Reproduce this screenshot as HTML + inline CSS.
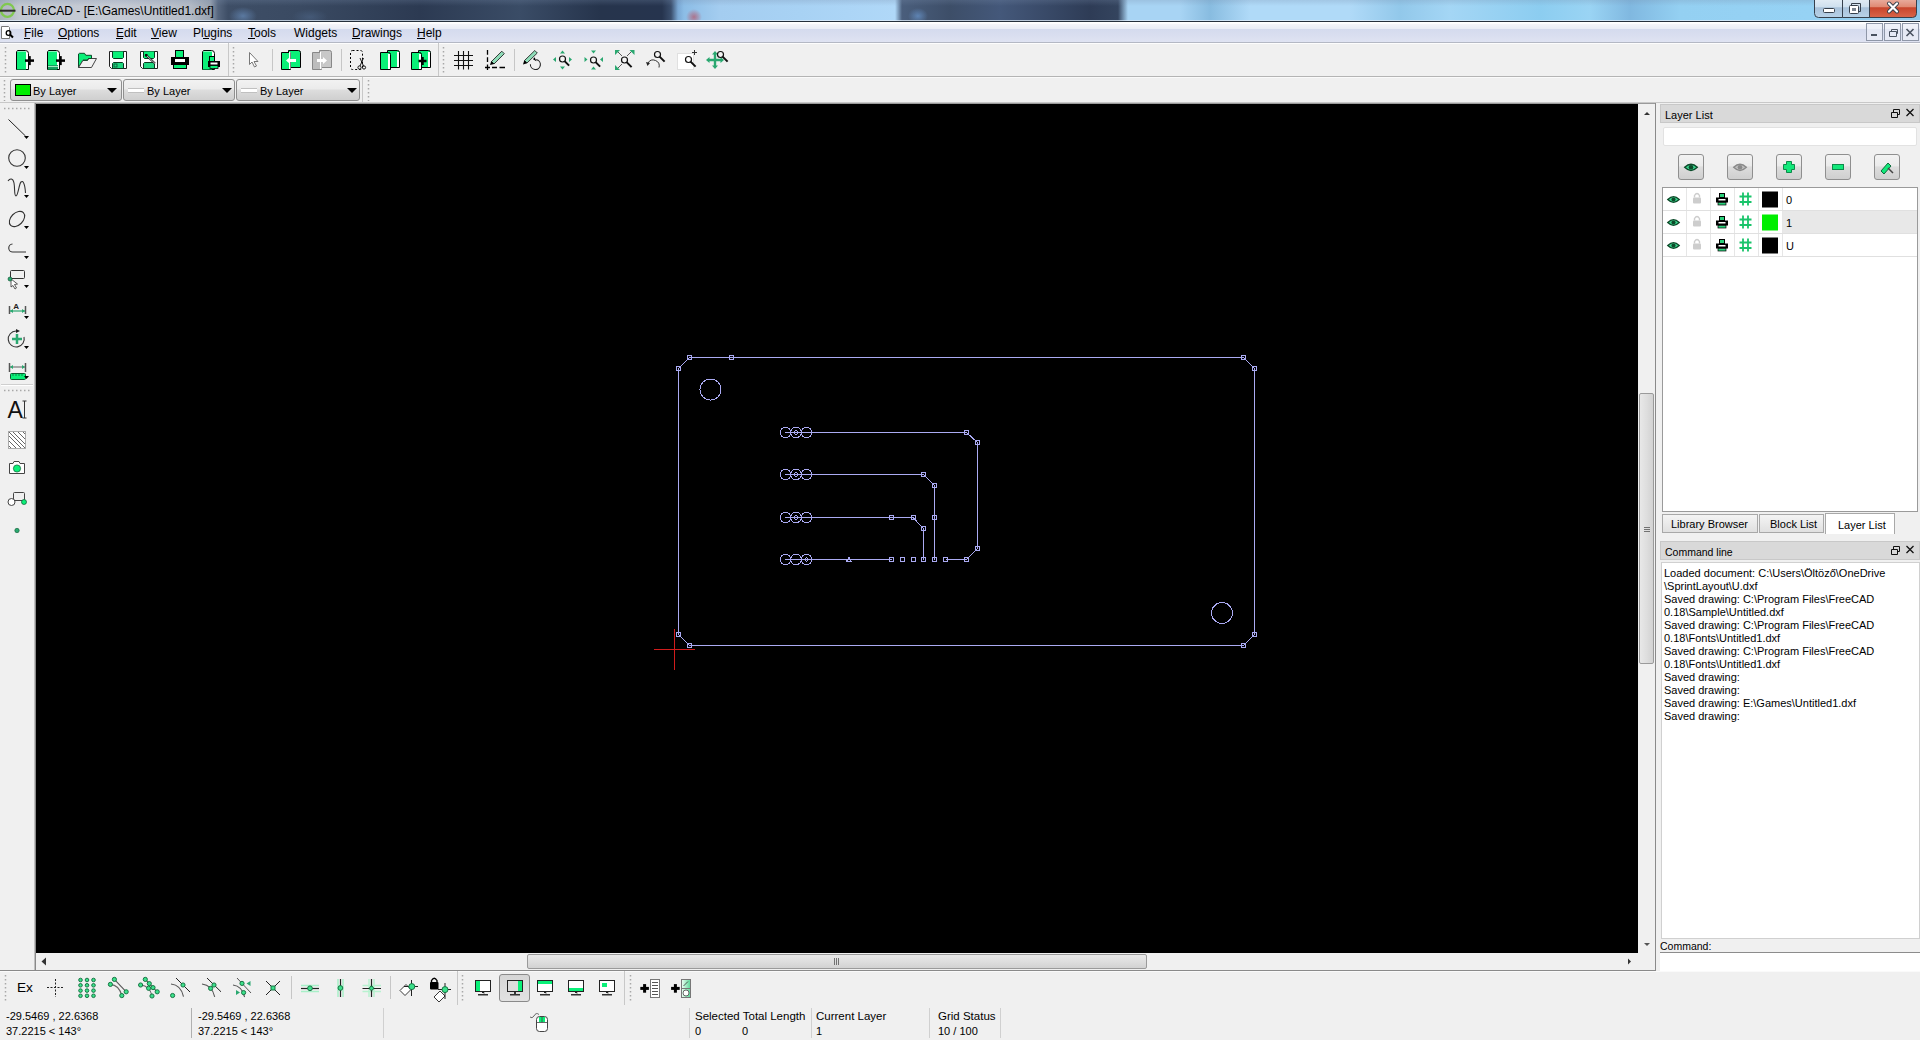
<!DOCTYPE html>
<html><head><meta charset="utf-8">
<style>
*{margin:0;padding:0;box-sizing:border-box}
html,body{width:1920px;height:1040px;overflow:hidden;background:#f0f0f0;font-family:"Liberation Sans",sans-serif;font-size:12px;color:#000;position:relative}
.a{position:absolute}
.t{position:absolute;white-space:nowrap;line-height:1}
#title{left:0;top:0;width:1920px;height:21px;background:radial-gradient(circle at 694px 17px,rgba(180,90,110,.75) 0,rgba(180,90,110,.4) 4px,rgba(180,90,110,0) 8px),radial-gradient(ellipse 14px 9px at 243px 16px,rgba(110,150,200,.6),rgba(110,150,200,0)),radial-gradient(ellipse 18px 8px at 310px 17px,rgba(90,120,160,.35),rgba(90,120,160,0)),radial-gradient(ellipse 10px 8px at 918px 16px,rgba(110,160,220,.6),rgba(110,160,220,0)),linear-gradient(rgba(120,140,170,.25),rgba(120,140,170,0) 6px),linear-gradient(90deg,#a8b4bc 0px,#c4c9d2 20px,#c6cbd4 120px,#b4bbc6 190px,#98a2b0 210px,#56667e 218px,#3e4e66 228px,#3a4a62 300px,#2c3a52 420px,#3a4c66 520px,#26344c 600px,#26344e 662px,#3a4e6c 671px,#7aa8d4 678px,#8cbde6 684px,#a4cdf0 720px,#a8d2f4 800px,#b0d8f8 895px,#4a5e7c 902px,#3d4e68 950px,#44587a 1000px,#2e3c56 1090px,#34445e 1118px,#a8d4f4 1128px,#a8d4f4 1180px,#88bce0 1210px,#b0daf8 1250px,#b0daf8 1350px,#92c8ea 1400px,#a4d6f5 1450px,#8ccdf0 1540px,#9ad4f4 1590px,#80b8e0 1630px,#94d0f2 1680px,#96d2f4 1810px,#90c8ea 1920px)}
#titlehl{left:0;top:20px;width:1920px;height:1px;background:rgba(225,238,250,.75)}
#titleline{left:0;top:21px;width:1920px;height:1px;background:#26303c}
#menubar{left:0;top:22px;width:1920px;height:21px;background:linear-gradient(#fff 0,#fff 1.3px,#f3f4f9 2.5px,#eaedf6 6.5px,#d5dbee 7.5px,#d8ddef 12px,#dfe3f2 20px);border-bottom:1px solid #b4b8c4}
.menu{position:absolute;top:5px;font-size:12px;line-height:1;color:#000}
.ul{position:absolute;height:1px;background:#000;top:16px}
.hl{position:absolute;height:1px;background:#a0a0a0}
.vl{position:absolute;width:1px;background:#a0a0a0}
.sep{position:absolute;width:1px;background:#b8b8b8}
.combo{position:absolute;top:79px;height:22px;border:1px solid #8f8f8f;border-radius:3px;background:linear-gradient(#f2f2f2 0,#ebebeb 45%,#dddddd 50%,#cfcfcf 100%)}
.combo .txt{position:absolute;top:6px;font-size:11px;line-height:1}
.arr{position:absolute;width:0;height:0;border-left:5px solid transparent;border-right:5px solid transparent;border-top:5px solid #000;top:8px}
#canvas{left:36px;top:104px;width:1602px;height:849px;background:#000}
.st{position:absolute;font-size:11px;line-height:1;white-space:nowrap}
.dock-title{position:absolute;left:1660px;width:260px;height:19px;background:#d9d9d9;border:1px solid #c8c8c8}
.dock-title .t{left:4px;top:5px;font-size:11px}
.cmd{position:absolute;left:1664px;font-size:11px;line-height:1;white-space:nowrap}
.cell{position:absolute;border-right:1px solid #e8e8e8;border-bottom:1px solid #e0e0e0}
.lbtn{position:absolute;top:154px;width:26px;height:26px;border:1px solid #8f8f8f;border-radius:3px;background:linear-gradient(#f2f2f2 0,#ebebeb 45%,#dddddd 50%,#cfcfcf 100%)}
.tab{position:absolute;top:514px;height:19px;border:1px solid #a8a8a8;background:linear-gradient(#f4f4f4,#e0e0e0);font-size:11px}
.tab .t{top:4px}
</style></head><body>
<div id="title" class="a"></div>
<div class="t" style="left:21px;top:5px;font-size:12px;color:#000">LibreCAD - [E:\Games\Untitled1.dxf]</div>
<div id="titlehl" class="a"></div><div id="titleline" class="a"></div>
<div id="menubar" class="a">
 <span class="menu" style="left:24px">File</span><i class="ul" style="left:24px;width:6px"></i>
 <span class="menu" style="left:58px">Options</span><i class="ul" style="left:58px;width:9px"></i>
 <span class="menu" style="left:116px">Edit</span><i class="ul" style="left:116px;width:7px"></i>
 <span class="menu" style="left:151px">View</span><i class="ul" style="left:151px;width:8px"></i>
 <span class="menu" style="left:193px">Plugins</span><i class="ul" style="left:203px;width:6px"></i>
 <span class="menu" style="left:248px">Tools</span><i class="ul" style="left:248px;width:7px"></i>
 <span class="menu" style="left:294px">Widgets</span>
 <span class="menu" style="left:352px">Drawings</span><i class="ul" style="left:352px;width:8px"></i>
 <span class="menu" style="left:417px">Help</span><i class="ul" style="left:417px;width:8px"></i>
</div>

<!-- toolbar lines -->
<div class="hl" style="left:0;top:43px;width:1920px;background:#fdfdfd"></div>
<div class="hl" style="left:0;top:76px;width:1920px;background:#b4b4b4"></div>
<div class="hl" style="left:0;top:77px;width:1920px;background:#fafafa"></div>
<div class="hl" style="left:0;top:102px;width:1920px;background:#c8c8c8"></div>
<div class="hl" style="left:35px;top:103px;width:1621px;background:#9a9a9a"></div>
<div class="vl" style="left:228px;top:43px;height:33px;background:#c8c8c8"></div>
<div class="vl" style="left:438px;top:43px;height:33px;background:#c8c8c8"></div>
<div class="vl" style="left:362px;top:77px;height:25px;background:#c8c8c8"></div>
<div class="sep" style="left:272px;top:49px;height:22px;background:#c6c6c6"></div>
<div class="sep" style="left:341px;top:49px;height:22px;background:#c6c6c6"></div>
<div class="sep" style="left:514px;top:49px;height:22px;background:#c6c6c6"></div>

<!-- combos -->
<div class="combo" style="left:10px;width:112px"><div class="txt" style="left:22px">By Layer</div><i class="arr" style="left:96px"></i></div>
<div class="combo" style="left:123px;width:112px"><div class="txt" style="left:23px">By Layer</div><i class="arr" style="left:98px"></i></div>
<div class="combo" style="left:236px;width:124px"><div class="txt" style="left:23px">By Layer</div><i class="arr" style="left:110px"></i></div>
<div class="a" style="left:15px;top:84px;width:16px;height:12px;background:#00ee00;border:1px solid #000"></div>
<div class="a" style="left:128px;top:88px;width:16px;height:5px;background:#fff;border-top:1px solid #c0c0c0;border-bottom:1px solid #c0c0c0"></div>
<div class="a" style="left:241px;top:88px;width:16px;height:5px;background:#fff;border-top:1px solid #c0c0c0;border-bottom:1px solid #c0c0c0"></div>

<!-- canvas frame -->
<div class="vl" style="left:34px;top:103px;height:868px;background:#c0c0c0"></div>
<div class="vl" style="left:35px;top:103px;height:868px;background:#8a8a8a"></div>
<div id="canvas" class="a"></div>
<div class="a" style="left:1638px;top:104px;width:17px;height:849px;background:#f0f0f0"></div>
<div class="a" style="left:36px;top:953px;width:1602px;height:17px;background:#f0f0f0"></div>
<div class="vl" style="left:1655px;top:103px;height:868px;background:#8a8a8a"></div>
<div class="hl" style="left:0;top:970px;width:1656px;background:#8a8a8a"></div>
<!-- scroll thumbs -->
<div class="a" style="left:1639px;top:393px;width:15px;height:271px;border:1px solid #9a9a9a;border-radius:2px;background:linear-gradient(90deg,#e8e8e8,#dedede 50%,#d2d2d2)"></div>
<div class="a" style="left:527px;top:954px;width:620px;height:15px;border:1px solid #9a9a9a;border-radius:2px;background:linear-gradient(#e8e8e8,#dedede 50%,#d2d2d2)"></div>

<!-- right dock -->
<div class="dock-title" style="top:104px"><span class="t">Layer List</span></div>
<div class="a" style="left:1663px;top:127px;width:254px;height:19px;background:#fff;border:1px solid #e2e2e2;border-radius:2px"></div>
<div class="lbtn" style="left:1678px"></div>
<div class="lbtn" style="left:1727px"></div>
<div class="lbtn" style="left:1776px"></div>
<div class="lbtn" style="left:1825px"></div>
<div class="lbtn" style="left:1874px"></div>
<div class="a" style="left:1662px;top:187px;width:256px;height:325px;background:#fff;border:1px solid #9a9a9a"></div>
<div class="a" style="left:1782px;top:211px;width:135px;height:23px;background:#e8e8e8"></div>
<div class="tab" style="left:1662px;width:96px"><span class="t" style="left:8px">Library Browser</span></div>
<div class="tab" style="left:1759px;width:65px"><span class="t" style="left:10px">Block List</span></div>
<div class="a" style="left:1825px;top:513px;width:70px;height:21px;background:#fff;border:1px solid #a8a8a8;border-bottom:none"><span class="t" style="left:12px;top:6px;font-size:11px">Layer List</span></div>

<div class="dock-title" style="top:541px"><span class="t" style="font-size:10.5px">Command line</span></div>
<div class="a" style="left:1661px;top:562px;width:259px;height:377px;background:#fff;border:1px solid #d0d0d0"></div>
<div class="t" style="left:1660px;top:941px;font-size:10.5px">Command:</div>
<div class="hl" style="left:1660px;top:952px;width:260px;background:#8c8c8c"></div>
<div class="a" style="left:1660px;top:953px;width:260px;height:18px;background:#fff"></div>

<!-- bottom toolbar -->
<div class="hl" style="left:0;top:971px;width:1920px;background:#fafafa"></div>
<div class="t" style="left:17px;top:981px;font-size:13.6px">Ex</div>
<div class="vl" style="left:457px;top:971px;height:34px;background:#c8c8c8"></div>
<div class="vl" style="left:624px;top:971px;height:34px;background:#c8c8c8"></div>
<div class="sep" style="left:291px;top:976px;height:23px;background:#c6c6c6"></div>
<div class="sep" style="left:390px;top:976px;height:23px;background:#c6c6c6"></div>
<div class="a" style="left:499px;top:974px;width:31px;height:28px;border:1px solid #8a8a8a;border-radius:3px;background:linear-gradient(#d6d6d6,#e2e2e2)"></div>

<!-- status bar -->
<div class="st" style="left:6px;top:1011px">-29.5469 , 22.6368</div>
<div class="st" style="left:6px;top:1026px">37.2215 &lt; 143°</div>
<div class="st" style="left:198px;top:1011px">-29.5469 , 22.6368</div>
<div class="st" style="left:198px;top:1026px">37.2215 &lt; 143°</div>
<div class="vl" style="left:191px;top:1008px;height:30px;background:#b0b0b0"></div>
<div class="vl" style="left:383px;top:1008px;height:30px;background:#d0d0d0"></div>
<div class="vl" style="left:689px;top:1008px;height:30px;background:#d0d0d0"></div>
<div class="vl" style="left:811px;top:1008px;height:30px;background:#d0d0d0"></div>
<div class="vl" style="left:929px;top:1008px;height:30px;background:#d0d0d0"></div>
<div class="vl" style="left:1000px;top:1008px;height:30px;background:#d0d0d0"></div>
<div class="st" style="left:695px;top:1011px;font-size:11.5px">Selected Total Length</div>
<div class="st" style="left:695px;top:1026px">0</div>
<div class="st" style="left:742px;top:1026px">0</div>
<div class="st" style="left:816px;top:1011px;font-size:11.5px">Current Layer</div>
<div class="st" style="left:816px;top:1026px">1</div>
<div class="st" style="left:938px;top:1011px;font-size:11.5px">Grid Status</div>
<div class="st" style="left:938px;top:1026px">10 / 100</div>

<div class="cmd" style="top:568px">Loaded document: C:\Users\Öltöző\OneDrive</div>
<div class="cmd" style="top:581px">\SprintLayout\U.dxf</div>
<div class="cmd" style="top:594px">Saved drawing: C:\Program Files\FreeCAD</div>
<div class="cmd" style="top:607px">0.18\Sample\Untitled.dxf</div>
<div class="cmd" style="top:620px">Saved drawing: C:\Program Files\FreeCAD</div>
<div class="cmd" style="top:633px">0.18\Fonts\Untitled1.dxf</div>
<div class="cmd" style="top:646px">Saved drawing: C:\Program Files\FreeCAD</div>
<div class="cmd" style="top:659px">0.18\Fonts\Untitled1.dxf</div>
<div class="cmd" style="top:672px">Saved drawing:</div>
<div class="cmd" style="top:685px">Saved drawing:</div>
<div class="cmd" style="top:698px">Saved drawing: E:\Games\Untitled1.dxf</div>
<div class="cmd" style="top:711px">Saved drawing:</div>
<!--CMDTEXT-->
<svg class="a" style="left:0;top:0" width="1920" height="1040" viewBox="0 0 1920 1040">
<g fill="none" stroke="#aaaaf2" stroke-width="1" shape-rendering="crispEdges">
<path d="M689.5 357.5H1243.5L1254.5 368.5V634.5L1243.5 645.5H689.5L678.5 634.5V368.5Z"/>
<circle cx="710.5" cy="389.5" r="10.5"/>
<circle cx="1222" cy="613" r="10.5"/>
<g>
<rect x="687.5" y="355.5" width="4" height="4"/><rect x="729.5" y="355.5" width="4" height="4"/><rect x="1241.5" y="355.5" width="4" height="4"/><rect x="1252.5" y="366.5" width="4" height="4"/>
<rect x="1252.5" y="632.5" width="4" height="4"/><rect x="1241.5" y="643.5" width="4" height="4"/><rect x="687.5" y="643.5" width="4" height="4"/><rect x="676.5" y="632.5" width="4" height="4"/><rect x="676.5" y="366.5" width="4" height="4"/>
</g>
<path d="M785 432.5H966.5L977.5 442.5V548.5L966.5 559.5"/>
<path d="M785 474.5H923.5L934.5 485.5V559.5"/>
<path d="M785 517.5H913L923.5 528.5V559.5"/>
<path d="M785 559.5H891.5M945.5 559.5H966.5"/>
<circle cx="785.5" cy="432.5" r="5.3"/><circle cx="796" cy="432.5" r="5.3"/><circle cx="806.5" cy="432.5" r="5.3"/>
<circle cx="785.5" cy="474.5" r="5.3"/><circle cx="796" cy="474.5" r="5.3"/><circle cx="806.5" cy="474.5" r="5.3"/>
<circle cx="785.5" cy="517.5" r="5.3"/><circle cx="796" cy="517.5" r="5.3"/><circle cx="806.5" cy="517.5" r="5.3"/>
<circle cx="785.5" cy="559.5" r="5.3"/><circle cx="796" cy="559.5" r="5.3"/><circle cx="806.5" cy="559.5" r="5.3"/>
<circle cx="796" cy="432.5" r="1.8"/><circle cx="796" cy="474.5" r="1.8"/><circle cx="796" cy="517.5" r="1.8"/><circle cx="806.5" cy="559.5" r="1.8"/>
<g>
<rect x="964" y="430" width="4" height="4"/><rect x="975.5" y="440.5" width="4" height="4"/><rect x="975.5" y="546.5" width="4" height="4"/><rect x="964" y="557.5" width="4" height="4"/>
<rect x="921.5" y="472.5" width="4" height="4"/><rect x="932" y="483" width="4" height="4"/><rect x="932" y="515" width="4" height="4"/>
<rect x="889.5" y="515" width="4" height="4"/><rect x="911" y="515" width="4" height="4"/><rect x="921.5" y="526" width="4" height="4"/>
<rect x="889.5" y="557.5" width="4" height="4"/><rect x="900" y="557.5" width="4" height="4"/><rect x="911" y="557.5" width="4" height="4"/><rect x="921.5" y="557.5" width="4" height="4"/><rect x="932" y="557.5" width="4" height="4"/><rect x="943.5" y="557.5" width="4" height="4"/>
<path d="M846.5 561.5L849 557L851.5 561.5Z"/>
</g>
</g>
<g stroke="#d01c1c" stroke-width="1" fill="none" shape-rendering="crispEdges"><path d="M654 649.5H695M674.5 629V670"/></g>
</svg>

<!--ICONS-START-->
<svg class="a" style="left:0;top:0" width="1920" height="1040" viewBox="0 0 1920 1040" fill="none">
<path d="M5.5 47V73" stroke="#a8a8a8" stroke-width="1.5" stroke-dasharray="1.5 2.5"/>
<path d="M16.5 52 L17.5 50.5 H25.5 Q28.5 50.5 28.5 53.5 V69.5 H16.5 Z" fill="#fff" stroke="#000"/>
<rect x="17" y="51.5" width="9" height="18" fill="#0af078"/>
<rect x="25.0" y="59.35" width="9" height="2.5" fill="#000"/><rect x="28.25" y="56.1" width="2.5" height="9" fill="#000"/>
<path d="M47.5 52 L48.5 50.5 H56.5 Q59.5 50.5 59.5 53.5 V69.5 H47.5 Z" fill="#fff" stroke="#000"/>
<rect x="48" y="51.5" width="9" height="18" fill="#0af078"/>
<rect x="48" y="65" width="10" height="4" fill="#15a060"/><path d="M48 66.5H58" stroke="#9fe8c0"/>
<rect x="56.0" y="59.35" width="9" height="2.5" fill="#000"/><rect x="59.25" y="56.1" width="2.5" height="9" fill="#000"/>
<path d="M78.5 67.5V54L79.5 53.3H84.5L85.8 55.3H91.5V58.5H88.5L87.5 60.3H83Z" fill="#0af078" stroke="#0a4a28"/>
<path d="M78.5 67.5L83 60.3H87.5L88.5 58.5H96.5L91.5 67.5Z" fill="#f2f2f2" stroke="#444"/>
<path d="M83 60.3H87.5L88.5 58.5H91.5" fill="none" stroke="#0a4a28"/>
<path d="M109.5 51.5H126.5V68.5H111.5L109.5 66.5Z" fill="#fff" stroke="#222"/>
<path d="M112.5 51.5V57.5L113.5 58.5H122.5L123.5 57.5V51.5" fill="#0af078" stroke="#0a3a20"/>
<path d="M112.5 68.5V63.5L113.5 62.5H122.5L123.5 63.5V68.5Z" fill="#1ed880" stroke="#0a3a20"/>
<rect x="114" y="64" width="3" height="3" fill="none" stroke="#0a5030" stroke-width=".8"/>
<path d="M140.5 51.5H157.5V68.5H142.5L140.5 66.5Z" fill="#fff" stroke="#222"/>
<path d="M143.5 51.5V57.5L144.5 58.5H153.5L154.5 57.5V51.5" fill="#0af078" stroke="#0a3a20"/>
<path d="M143.5 68.5V63.5L144.5 62.5H153.5L154.5 63.5V68.5Z" fill="#1ed880" stroke="#0a3a20"/>
<path d="M145.5 54.5L155 63.5" stroke="#222" stroke-width="2"/><path d="M145.5 54.5L156 64.5" stroke="#ddd" stroke-width=".8"/><path d="M145 54L148 54.5L145.5 57Z" fill="#000"/>
<rect x="175.5" y="50.5" width="8" height="7" fill="#0af078" stroke="#000"/>
<rect x="171" y="57" width="18" height="8" fill="#000"/>
<rect x="175" y="59" width="10" height="3" fill="#fff"/>
<rect x="173.5" y="64.5" width="13" height="4" fill="#0af078" stroke="#000"/>
<path d="M202.5 52 L203.5 50.5 H211.5 Q214.5 50.5 214.5 53.5 V69.5 H202.5 Z" fill="#fff" stroke="#000"/>
<rect x="203" y="51.5" width="9" height="18" fill="#0af078"/>
<rect x="209.5" y="56.5" width="5" height="5" fill="#0af078" stroke="#000"/>
<rect x="208" y="61" width="12" height="6" fill="#000"/><rect x="210.5" y="62.5" width="7" height="2" fill="#fff"/><rect x="210" y="65.5" width="8" height="3" fill="#0af078" stroke="#000" stroke-width=".8"/>
<path d="M233.5 47V73" stroke="#a8a8a8" stroke-width="1.5" stroke-dasharray="1.5 2.5"/>
<path d="M249.5 52.5L249.5 64.5L252 62L254.5 67L256.5 66L254 61.5L258 61.5Z" fill="#fff" stroke="#777"/>
<path d="M288.5 50.5H298.5Q300.5 50.5 300.5 52.5V67.5H288.5Z" fill="#0af078" stroke="#000"/>
<path d="M281.5 52.5H290.5V69.5H281.5Z" fill="#0af078" stroke="#000"/>
<rect x="289" y="52" width="1.5" height="17" fill="#fff"/>
<path d="M286 60.5L290 57V59H296V62H290V64Z" fill="#fff"/>
<path d="M319.5 50.5H329.5Q331.5 50.5 331.5 52.5V67.5H319.5Z" fill="#c8c8c8" stroke="#888"/>
<path d="M312.5 52.5H321.5V69.5H312.5Z" fill="#bdbdbd" stroke="#888"/>
<rect x="320" y="52" width="1.5" height="17" fill="#fff"/>
<path d="M327 60.5L323 57V59H317V62H323V64Z" fill="#fff"/>
<rect x="350.5" y="50.5" width="12" height="19" rx="2" fill="none" stroke="#000" stroke-dasharray="2 2"/>
<path d="M360 58L363.5 66M363.5 58L360 66" stroke="#000" stroke-width=".9"/><circle cx="359.5" cy="67.5" r="1.6" fill="none" stroke="#000" stroke-width=".9"/><circle cx="364" cy="67.5" r="1.6" fill="none" stroke="#000" stroke-width=".9"/>
<path d="M387.5 50.5H397.5Q399.5 50.5 399.5 52.5V67.5H387.5Z" fill="#0af078" stroke="#000"/><rect x="397" y="52" width="2" height="15" fill="#fff"/>
<path d="M380.5 52.5H388.5Q390.5 52.5 390.5 54.5V69.5H380.5Z" fill="#0af078" stroke="#000"/><rect x="388" y="54" width="2" height="15" fill="#fff"/>
<path d="M418.5 50.5H428.5Q430.5 50.5 430.5 52.5V67.5H418.5Z" fill="#0af078" stroke="#000"/><rect x="428" y="52" width="2" height="15" fill="#fff"/>
<path d="M411.5 52.5H419.5Q421.5 52.5 421.5 54.5V69.5H411.5Z" fill="#0af078" stroke="#000"/><rect x="419" y="54" width="2" height="15" fill="#fff"/>
<rect x="418.5" y="59.75" width="8" height="2.5" fill="#000"/><rect x="421.25" y="57.0" width="2.5" height="8" fill="#000"/>
<path d="M443.5 47V73" stroke="#a8a8a8" stroke-width="1.5" stroke-dasharray="1.5 2.5"/>
<path d="M458.5 51V69.5M463.5 51V69.5M468.5 51V69.5M454 55.5H473M454 60.5H473M454 65.5H473" stroke="#111" stroke-width="1.1"/>
<path d="M487.5 50V54.8M487.5 57.2V62M487.5 64.5V70M485 67.5H490M492 67.5H497M499.5 67.5H505" stroke="#000" stroke-width="1.3"/>
<path d="M491.5 61.5L501.8 51.2L504.3 53.7L494 64Z" fill="#8fdcb8" stroke="#111" stroke-width=".8"/><path d="M490 65L491.3 61L494.2 63.9Z" fill="#000"/>
<path d="M524.5 60.5L534.8 50.5L537.3 53L527 63Z" fill="#8fdcb8" stroke="#111" stroke-width=".8"/><path d="M523 64.5L524.3 60.3L527.2 63.2Z" fill="#000"/>
<path d="M530.4 64.2A5 5 0 1 0 536.2 59.6" fill="none" stroke="#222" stroke-width="1.1"/><path d="M534.6 57.2L533 59.3L536.4 61.2Z" fill="#000"/>
<circle cx="562.5" cy="59" r="3" fill="#fff" fill-opacity=".3" stroke="#111" stroke-width="1.2"/><path d="M564.6 61.1L569.1 65.6" stroke="#111" stroke-width="2"/>
<path d="M560 53.5L562.5 50.5L565 53.5Z M560 66.5L562.5 69.5L565 66.5Z M556 57L553 59.5L556 62Z M569 57L572 59.5L569 62Z" fill="#2aa870"/>
<circle cx="593.5" cy="60" r="3" fill="#fff" fill-opacity=".3" stroke="#111" stroke-width="1.2"/><path d="M595.6 62.1L600.1 66.6" stroke="#111" stroke-width="2"/>
<path d="M591 50.5L593.5 53.5L596 50.5Z M591 69.5L593.5 66.5L596 69.5Z M584.5 57L587.5 59.5L584.5 62Z M603 57L600 59.5L603 62Z" fill="#2aa870"/>
<circle cx="624.5" cy="60" r="3" fill="#fff" fill-opacity=".3" stroke="#111" stroke-width="1.2"/><path d="M626.6 62.1L631.6 67.1" stroke="#111" stroke-width="2"/>
<path d="M617 51L622 56M632 51L627 56M617 69L622 64" stroke="#333" stroke-width=".8"/><path d="M615 50H620L615 55Z M634.5 50H629.5L634.5 55Z M615 70H620L615 65Z" fill="#2aa870"/>
<path d="M648 63A6 6 0 0 1 659 67.5" fill="none" stroke="#333"/><path d="M646 62L650 63L647.5 66Z" fill="#222"/>
<circle cx="657.5" cy="54.5" r="3" fill="#fff" fill-opacity=".3" stroke="#111" stroke-width="1.2"/><path d="M659.6 56.6L664.6 61.6" stroke="#111" stroke-width="2"/>
<rect x="677.5" y="53.5" width="16" height="16" fill="#fff" stroke="#e0e0e0"/>
<circle cx="688.5" cy="59.5" r="3" fill="#fff" fill-opacity=".3" stroke="#111" stroke-width="1.2"/><path d="M690.6 61.6L695.6 66.6" stroke="#111" stroke-width="2"/>
<path d="M694.5 50V55M692 52.5H697" stroke="#333"/>
<path d="M715 51L718 54.5H716.2V58.8H720.5V57L724 60L720.5 63V61.2H716.2V65.5H718L715 69L712 65.5H713.8V61.2H709.5V63L706 60L709.5 57V58.8H713.8V54.5H712Z" fill="#2aa870"/>
<circle cx="720.5" cy="54.5" r="3" fill="#fff" fill-opacity=".3" stroke="#111" stroke-width="1.2"/><path d="M722.6 56.6L727.6 61.6" stroke="#111" stroke-width="2"/>
<rect x="1866.5" y="23.5" width="16" height="17" fill="#eef0f8" fill-opacity=".6" stroke="#8f97a8"/>
<rect x="1884.5" y="23.5" width="16" height="17" fill="#eef0f8" fill-opacity=".6" stroke="#8f97a8"/>
<rect x="1902.5" y="23.5" width="16" height="17" fill="#eef0f8" fill-opacity=".6" stroke="#8f97a8"/>
<rect x="1871" y="34" width="6" height="2" fill="#4a5260"/>
<path d="M1889.5 31.5H1896.5V36.5H1889.5Z M1891.5 31.5V29.5H1897.5V33.5H1896.5" fill="none" stroke="#4a5260"/>
<path d="M1906.5 29L1913.5 36M1913.5 29L1906.5 36" stroke="#4a5260" stroke-width="1.6"/>
<defs><linearGradient id="wb" x1="0" y1="0" x2="0" y2="1"><stop offset="0" stop-color="#e4eef6"/><stop offset=".45" stop-color="#cfe0ee"/><stop offset=".5" stop-color="#a9c2da"/><stop offset="1" stop-color="#b8d2e8"/></linearGradient><linearGradient id="wc" x1="0" y1="0" x2="0" y2="1"><stop offset="0" stop-color="#eab3a6"/><stop offset=".45" stop-color="#e08a74"/><stop offset=".5" stop-color="#c8452c"/><stop offset="1" stop-color="#d8654a"/></linearGradient></defs>
<path d="M1814.5 -2V13.5Q1814.5 17.5 1818.5 17.5H1842.5V-2Z" fill="url(#wb)" stroke="#36404c"/>
<path d="M1842.5 -2V17.5H1869.5V-2Z" fill="url(#wb)" stroke="#36404c"/>
<path d="M1869.5 -2V17.5H1912.5Q1916.5 17.5 1916.5 13.5V-2Z" fill="url(#wc)" stroke="#36404c"/>
<rect x="1823.5" y="8.5" width="11" height="4" rx="1" fill="#fff" stroke="#36404c"/>
<rect x="1849.5" y="5.5" width="9" height="8" rx="1" fill="#fff" stroke="#36404c"/><path d="M1851.5 5.5V3.5H1860.5V11.5H1858.5" fill="none" stroke="#36404c"/><rect x="1852" y="8" width="4" height="3" fill="#7a8490"/>
<path d="M1889 3.5L1897 11.5M1897 3.5L1889 11.5" stroke="#36404c" stroke-width="4" stroke-linecap="round"/><path d="M1889 3.5L1897 11.5M1897 3.5L1889 11.5" stroke="#fff" stroke-width="2.2" stroke-linecap="round"/>
<circle cx="7.5" cy="10.3" r="6.5" fill="#b4b8c4" stroke="#80c850" stroke-width="2.2"/><path d="M0 10.7H15.5" stroke="#2a2a2a" stroke-width="2"/>
<path d="M1.5 26.5H8.5L9.5 27.5V38.5H1.5Z" fill="#fff" stroke="#777"/><circle cx="8.5" cy="33" r="2.3" fill="none" stroke="#000" stroke-width="1.3"/><path d="M10.2 34.8L13 37.5" stroke="#000" stroke-width="2"/>
<path d="M4.5 80V101" stroke="#a8a8a8" stroke-width="1.5" stroke-dasharray="1.5 2.5"/>
<path d="M368.5 80V101" stroke="#a8a8a8" stroke-width="1.5" stroke-dasharray="1.5 2.5"/>
<path d="M4 108.5H31" stroke="#a8a8a8" stroke-width="1.5" stroke-dasharray="1.5 2.5"/>
<path d="M8.5 119.5L25.5 136" stroke="#222"/>
<path d="M24 136H29L26.5 139Z" fill="#000"/>
<circle cx="17" cy="158" r="8.3" fill="none" stroke="#333" stroke-width="1.1"/>
<path d="M24 166H29L26.5 169Z" fill="#000"/>
<path d="M8 181C10 178 13 178 14 183C15 188 14 196 16 196C18 196 19 184 21 182C23 180 25 184 25.5 193" fill="none" stroke="#333" stroke-width="1.1"/>
<path d="M24 195H29L26.5 198Z" fill="#000"/>
<ellipse cx="17" cy="219" rx="9" ry="6" transform="rotate(-45 17 219)" fill="none" stroke="#333" stroke-width="1.1"/>
<path d="M24 226H29L26.5 229Z" fill="#000"/>
<path d="M12.5 244A4 4 0 0 0 13 252H26" fill="none" stroke="#333" stroke-width="1.1"/>
<path d="M24 256H29L26.5 259Z" fill="#000"/>
<rect x="10.5" y="270.5" width="14" height="8" rx="1" fill="none" stroke="#333"/><path d="M11 279L11 287L13 285.5L15 289L16.5 288L14.5 284.5L17.5 284Z" fill="#fff" stroke="#333" stroke-width=".8"/><circle cx="10" cy="279" r="2" fill="#2aa870" stroke="#0a4a2a" stroke-width=".6"/>
<path d="M24 285H29L26.5 288Z" fill="#000"/>
<path d="M9.5 306V314M25.5 306V314" stroke="#555" stroke-width="1.5"/><path d="M10 311H25" stroke="#2aa870" stroke-width="1.2"/><path d="M10 311L13 309V313Z M25 311L22 309V313Z" fill="#2aa870"/><text x="13.2" y="309" font-size="8" font-weight="bold" fill="#222" font-family="Liberation Sans">A</text>
<path d="M24 316H29L26.5 319Z" fill="#000"/>
<path d="M24 337A8 8 0 1 1 16 331" fill="none" stroke="#333" stroke-width="1.1"/><path d="M16 329L20 331L16 333Z" fill="#222"/><path d="M17 334V344M12 339H22" stroke="#2aa870" stroke-width="2.5"/>
<path d="M24 346H29L26.5 349Z" fill="#000"/>
<path d="M9.5 363V372M25.5 363V372" stroke="#555" stroke-width="1.5"/><path d="M10 367H25" stroke="#777" stroke-width="1.2"/><path d="M10 367L13 365V369Z M25 367L22 365V369Z" fill="#2aa870"/><rect x="10.5" y="373.5" width="15" height="6" rx="1" fill="#0af078" stroke="#0a5a30"/><path d="M13 374V376M16 374V376M19 374V376M22 374V376" stroke="#0a5a30" stroke-width=".7"/>
<path d="M24 376H29L26.5 379Z" fill="#000"/>
<path d="M1 384.5H33" stroke="#cfcfcf"/><path d="M1 385.5H33" stroke="#fff"/>
<path d="M4 390.5H31" stroke="#a8a8a8" stroke-width="1.5" stroke-dasharray="1.5 2.5"/>
<text x="7.5" y="418" font-size="23" fill="#111" font-family="Liberation Sans">A</text><path d="M24.5 401V418M22.5 401H26.5M22.5 418H26.5" stroke="#333"/>
<rect x="8.5" y="431.5" width="17" height="17" fill="#fff" stroke="#aaa"/><path d="M9 436L21 448M9 441L16 448M9 446L11 448M13 432L25 444M18 432L25 439M23 432L25 434M9 432L25 448" stroke="#555" stroke-width=".9"/>
<path d="M9.5 463.5H13L14 461.5H19L20 463.5H24.5V473.5H9.5Z" fill="#fff" stroke="#444"/><circle cx="17" cy="468.5" r="3.6" fill="#0af078" stroke="#0a5a30" stroke-width=".7"/>
<rect x="13.5" y="492.5" width="11" height="8" rx="1" fill="none" stroke="#444"/><circle cx="11.5" cy="502" r="3.5" fill="#fff" stroke="#444"/><circle cx="24" cy="502" r="2.5" fill="#0af078" stroke="#0a5a30" stroke-width=".7"/>
<circle cx="17" cy="530.5" r="2.2" fill="#2aa870" stroke="#0a5a30" stroke-width=".6"/>
<path d="M5.5 975V1002" stroke="#a8a8a8" stroke-width="1.5" stroke-dasharray="1.5 2.5"/>
<path d="M55.5 979V997M47 987.5H64" stroke="#222" stroke-dasharray="2 1.5"/>
<circle cx="80.5" cy="980" r="1.8" fill="#3ce08a" stroke="#0d6a3a" stroke-width=".9"/>
<circle cx="80.5" cy="985.3" r="1.8" fill="#3ce08a" stroke="#0d6a3a" stroke-width=".9"/>
<circle cx="80.5" cy="990.6" r="1.8" fill="#3ce08a" stroke="#0d6a3a" stroke-width=".9"/>
<circle cx="80.5" cy="995.8" r="1.8" fill="#3ce08a" stroke="#0d6a3a" stroke-width=".9"/>
<circle cx="87" cy="980" r="1.8" fill="#3ce08a" stroke="#0d6a3a" stroke-width=".9"/>
<circle cx="87" cy="985.3" r="1.8" fill="#3ce08a" stroke="#0d6a3a" stroke-width=".9"/>
<circle cx="87" cy="990.6" r="1.8" fill="#3ce08a" stroke="#0d6a3a" stroke-width=".9"/>
<circle cx="87" cy="995.8" r="1.8" fill="#3ce08a" stroke="#0d6a3a" stroke-width=".9"/>
<circle cx="93.5" cy="980" r="1.8" fill="#3ce08a" stroke="#0d6a3a" stroke-width=".9"/>
<circle cx="93.5" cy="985.3" r="1.8" fill="#3ce08a" stroke="#0d6a3a" stroke-width=".9"/>
<circle cx="93.5" cy="990.6" r="1.8" fill="#3ce08a" stroke="#0d6a3a" stroke-width=".9"/>
<circle cx="93.5" cy="995.8" r="1.8" fill="#3ce08a" stroke="#0d6a3a" stroke-width=".9"/>
<path d="M114.4 979.4L126.2 991.8" stroke="#555" stroke-width="1.1"/><path d="M110.4 984.4Q119 985 121.8 995.6" fill="none" stroke="#666" stroke-width="1.1"/>
<circle cx="114.4" cy="979.4" r="2.1" fill="#3ce08a" stroke="#0d6a3a" stroke-width=".9"/>
<circle cx="126.2" cy="991.8" r="2.1" fill="#3ce08a" stroke="#0d6a3a" stroke-width=".9"/>
<circle cx="110.4" cy="984.4" r="2.1" fill="#3ce08a" stroke="#0d6a3a" stroke-width=".9"/>
<circle cx="121.8" cy="995.6" r="2.1" fill="#3ce08a" stroke="#0d6a3a" stroke-width=".9"/>
<path d="M145.3 979.4L157.2 991.8" stroke="#555" stroke-width="1.1"/><path d="M140.6 985Q150 986 152 996" fill="none" stroke="#666" stroke-width="1.1"/>
<circle cx="145.3" cy="979.4" r="2.1" fill="#3ce08a" stroke="#0d6a3a" stroke-width=".9"/>
<circle cx="149.3" cy="983.6" r="2.1" fill="#3ce08a" stroke="#0d6a3a" stroke-width=".9"/>
<circle cx="153" cy="987.6" r="2.1" fill="#3ce08a" stroke="#0d6a3a" stroke-width=".9"/>
<circle cx="157.2" cy="991.8" r="2.1" fill="#3ce08a" stroke="#0d6a3a" stroke-width=".9"/>
<circle cx="140.6" cy="985" r="2.1" fill="#3ce08a" stroke="#0d6a3a" stroke-width=".9"/>
<circle cx="148.6" cy="988.3" r="2.1" fill="#3ce08a" stroke="#0d6a3a" stroke-width=".9"/>
<circle cx="152" cy="996" r="2.1" fill="#3ce08a" stroke="#0d6a3a" stroke-width=".9"/>
<path d="M176 978L190 992" stroke="#222" stroke-width="1"/><path d="M171 984Q181 985 183.5 996.6" fill="none" stroke="#555" stroke-width="1.1"/>
<circle cx="183" cy="985" r="2.1" fill="#3ce08a" stroke="#0d6a3a" stroke-width=".9"/>
<circle cx="172.6" cy="995.5" r="2.1" fill="#3ce08a" stroke="#0d6a3a" stroke-width=".9"/>
<path d="M207 978L221 991.8" stroke="#222" stroke-width="1"/><path d="M202 984Q212 985 214.7 996.8" fill="none" stroke="#555" stroke-width="1.1"/>
<circle cx="214" cy="985" r="2.1" fill="#3ce08a" stroke="#0d6a3a" stroke-width=".9"/>
<circle cx="210.6" cy="988.4" r="2.1" fill="#3ce08a" stroke="#0d6a3a" stroke-width=".9"/>
<path d="M237 978L251 993" stroke="#555" stroke-width="1"/><path d="M233 985Q242 986 244.6 997" fill="none" stroke="#555" stroke-width="1.1"/>
<circle cx="242" cy="983.4" r="2.1" fill="#3ce08a" stroke="#0d6a3a" stroke-width=".9"/>
<circle cx="243.6" cy="992.6" r="2.1" fill="#3ce08a" stroke="#0d6a3a" stroke-width=".9"/>
<path d="M250.5 981V986L246.5 983.5Z M236 990V995L240 992.5Z" fill="#2aa870"/>
<path d="M266 981L280 995M280 981L266 995" stroke="#222" stroke-width="1"/>
<rect x="271" y="986" width="4" height="4" fill="#3ce08a" stroke="#0d6a3a" stroke-width=".9"/>
<path d="M301 985.5H319M301 991.5H319" stroke="#a8f0c8" stroke-width="1.5"/><path d="M301 988.5H319" stroke="#222" stroke-width="1.2"/>
<circle cx="310" cy="988.3" r="2.4" fill="#3ce08a" stroke="#0d6a3a" stroke-width=".9"/>
<path d="M338 979V997M343 979V997" stroke="#a8f0c8" stroke-width="1.5"/><path d="M340.5 979V997" stroke="#222" stroke-width="1.2"/>
<circle cx="340.4" cy="988" r="2.4" fill="#3ce08a" stroke="#0d6a3a" stroke-width=".9"/>
<path d="M362.5 985.5H381M362.5 991.5H381M369 979V997M374 979V997" stroke="#b8f2d0" stroke-width="1.5"/><path d="M362.5 988.5H381M371.5 979V997" stroke="#222" stroke-width="1.2"/>
<circle cx="371.5" cy="988.3" r="2" fill="#3ce08a" stroke="#0d6a3a" stroke-width=".9"/>
<path d="M400 990.5L406 984.5L411 989.5L405 995.5Z" fill="#fff" stroke="#222" stroke-width=".9"/><path d="M411.5 980V996M404 986.5H418" stroke="#222" stroke-width="1"/>
<circle cx="411.8" cy="986.6" r="3" fill="#3ce08a" stroke="#0d6a3a" stroke-width=".9"/>
<rect x="430" y="982" width="8.5" height="7.5" rx="1" fill="#000"/><path d="M431.5 982.5V980.5Q434.2 976 437 980.5V982.5" fill="none" stroke="#000" stroke-width="1.4"/>
<path d="M434 997L440 991L445 996L439 1002Z" fill="#fff" stroke="#222" stroke-width=".9"/><path d="M445 983V999M438 989.5H451" stroke="#222" stroke-width="1"/>
<circle cx="445" cy="989.6" r="3" fill="#3ce08a" stroke="#0d6a3a" stroke-width=".9"/>
<path d="M462.5 975V1002" stroke="#a8a8a8" stroke-width="1.5" stroke-dasharray="1.5 2.5"/>
<rect x="475.5" y="980.5" width="15" height="11" fill="#fff" stroke="#222"/>
<rect x="476" y="981" width="4" height="10" fill="#0af078"/>
<path d="M482 992.5H484V993.5" stroke="#222"/><rect x="478" y="994" width="10" height="1.5" fill="#333"/>
<rect x="507.5" y="980.5" width="15" height="11" fill="#ddd" stroke="#222"/><rect x="518" y="981" width="4" height="10" fill="#0af078"/><rect x="510" y="994" width="10" height="1.5" fill="#333"/><rect x="514" y="992" width="2" height="2" fill="#333"/>
<rect x="537.5" y="980.5" width="15" height="11" fill="#fff" stroke="#222"/>
<rect x="538" y="981" width="14" height="3" fill="#0af078"/>
<path d="M544 992.5H546V993.5" stroke="#222"/><rect x="540" y="994" width="10" height="1.5" fill="#333"/>
<rect x="568.5" y="980.5" width="15" height="11" fill="#fff" stroke="#222"/>
<rect x="569" y="988" width="14" height="3" fill="#0af078"/>
<path d="M575 992.5H577V993.5" stroke="#222"/><rect x="571" y="994" width="10" height="1.5" fill="#333"/>
<rect x="599.5" y="980.5" width="15" height="11" fill="#fff" stroke="#222"/>
<rect x="602" y="983" width="5" height="4" fill="#0af078"/>
<path d="M606 992.5H608V993.5" stroke="#222"/><rect x="602" y="994" width="10" height="1.5" fill="#333"/>
<path d="M630.5 975V1002" stroke="#a8a8a8" stroke-width="1.5" stroke-dasharray="1.5 2.5"/>
<rect x="640.3000000000001" y="986.9" width="8.6" height="3" fill="#000"/><rect x="643.1" y="984.1" width="3" height="8.6" fill="#000"/>
<rect x="650.5" y="979.5" width="9" height="18" fill="#fff" stroke="#777"/><path d="M652 982.5H658M652 985.5H658M652 988.5H658M652 991.5H658M652 994.5H658" stroke="#555"/>
<rect x="671.1" y="986.9" width="8.6" height="3" fill="#000"/><rect x="673.9" y="984.1" width="3" height="8.6" fill="#000"/>
<defs><linearGradient id="gb" x1="0" y1="0" x2="1" y2="0"><stop offset="0" stop-color="#f0fff6"/><stop offset="1" stop-color="#5ad898"/></linearGradient></defs>
<rect x="681.5" y="979.5" width="9" height="18" fill="url(#gb)" stroke="#777"/><path d="M681 988.5H691" stroke="#777"/><path d="M683.5 986L688 981.5" stroke="#333" stroke-width=".8"/><circle cx="686" cy="993" r="3" fill="#fff" stroke="#444" stroke-width=".8"/>
<path d="M530 1017Q532 1019 534 1016Q536 1012 539 1014.5" fill="none" stroke="#444" stroke-width=".8"/>
<rect x="536.5" y="1016.5" width="11" height="15" rx="3" fill="#fff" stroke="#444"/><rect x="539" y="1017" width="6" height="5" fill="#0af078"/><path d="M537 1022.5H547M542 1017V1022.5" stroke="#444" stroke-width=".8"/>
<path d="M1891.5 112.5H1897.5V117.5H1891.5Z M1893.5 112.5V109.5H1899.5V114.5H1897.5" fill="none" stroke="#111"/>
<path d="M1906.5 109L1913.5 116M1913.5 109L1906.5 116" stroke="#111" stroke-width="1.3"/>
<path d="M1891.5 549.5H1897.5V554.5H1891.5Z M1893.5 549.5V546.5H1899.5V551.5H1897.5" fill="none" stroke="#111"/>
<path d="M1906.5 546L1913.5 553M1913.5 546L1906.5 553" stroke="#111" stroke-width="1.3"/>
<path d="M1684.7 167.3Q1691 161.0 1697.3 167.3Q1691 173.60000000000002 1684.7 167.3Z" fill="#3ad890" stroke="#0d4a2a" stroke-width="1.4"/><circle cx="1691" cy="167.3" r="2.3100000000000005" fill="#0d4a2a"/>
<path d="M1733.7 167.3Q1740 161.0 1746.3 167.3Q1740 173.60000000000002 1733.7 167.3Z" fill="#c0c0c0" stroke="#8a8a8a" stroke-width="1.4"/><circle cx="1740" cy="167.3" r="2.3100000000000005" fill="#8a8a8a"/>
<path d="M1786.5 161.5H1791.5V164.5H1794.5V169.5H1791.5V172.5H1786.5V169.5H1783.5V164.5H1786.5Z" fill="#12e87a" stroke="#0d8a4a"/>
<rect x="1832.5" y="164.5" width="11" height="5" fill="#12e87a" stroke="#0d8a4a"/>
<path d="M1881 171L1888 163L1891 166L1884 174Z" fill="#12e87a" stroke="#0d6a3a"/><path d="M1888 168L1893 173" stroke="#444" stroke-width="1.5"/>
<path d="M1667.8 199.5Q1673.5 193.8 1679.2 199.5Q1673.5 205.2 1667.8 199.5Z" fill="#3ad890" stroke="#0d4a2a" stroke-width="1.4"/><circle cx="1673.5" cy="199.5" r="2.09" fill="#0d4a2a"/>
<rect x="1693" y="197.5" width="8" height="6" rx="1" fill="#cdcdcd"/><path d="M1694.5 197.5V195.5Q1697 191.5 1699.5 195.5V197.5" fill="none" stroke="#cdcdcd" stroke-width="1.4"/>
<rect x="1719.5" y="193.5" width="5" height="4" fill="#2ad07a" stroke="#000"/><rect x="1716" y="197.5" width="12" height="5" fill="#000"/><rect x="1718.5" y="199.0" width="7" height="1.5" fill="#fff"/><rect x="1718" y="202.5" width="8" height="2.5" fill="#2ad07a" stroke="#000" stroke-width=".7"/>
<path d="M1743 192.5V205.5M1748 192.5V205.5M1739.5 196.5H1751.5M1739.5 202.0H1751.5" stroke="#19c46a" stroke-width="1.8"/>
<rect x="1762" y="191.5" width="16" height="16" fill="#000"/>
<text x="1786" y="203.5" font-size="11" font-family="Liberation Sans" fill="#000">0</text>
<path d="M1667.8 222.5Q1673.5 216.8 1679.2 222.5Q1673.5 228.2 1667.8 222.5Z" fill="#3ad890" stroke="#0d4a2a" stroke-width="1.4"/><circle cx="1673.5" cy="222.5" r="2.09" fill="#0d4a2a"/>
<rect x="1693" y="220.5" width="8" height="6" rx="1" fill="#cdcdcd"/><path d="M1694.5 220.5V218.5Q1697 214.5 1699.5 218.5V220.5" fill="none" stroke="#cdcdcd" stroke-width="1.4"/>
<rect x="1719.5" y="216.5" width="5" height="4" fill="#2ad07a" stroke="#000"/><rect x="1716" y="220.5" width="12" height="5" fill="#000"/><rect x="1718.5" y="222.0" width="7" height="1.5" fill="#fff"/><rect x="1718" y="225.5" width="8" height="2.5" fill="#2ad07a" stroke="#000" stroke-width=".7"/>
<path d="M1743 215.5V228.5M1748 215.5V228.5M1739.5 219.5H1751.5M1739.5 225.0H1751.5" stroke="#19c46a" stroke-width="1.8"/>
<rect x="1762" y="214.5" width="16" height="16" fill="#00ee00"/>
<text x="1786" y="226.5" font-size="11" font-family="Liberation Sans" fill="#000">1</text>
<path d="M1667.8 245.5Q1673.5 239.8 1679.2 245.5Q1673.5 251.2 1667.8 245.5Z" fill="#3ad890" stroke="#0d4a2a" stroke-width="1.4"/><circle cx="1673.5" cy="245.5" r="2.09" fill="#0d4a2a"/>
<rect x="1693" y="243.5" width="8" height="6" rx="1" fill="#cdcdcd"/><path d="M1694.5 243.5V241.5Q1697 237.5 1699.5 241.5V243.5" fill="none" stroke="#cdcdcd" stroke-width="1.4"/>
<rect x="1719.5" y="239.5" width="5" height="4" fill="#2ad07a" stroke="#000"/><rect x="1716" y="243.5" width="12" height="5" fill="#000"/><rect x="1718.5" y="245.0" width="7" height="1.5" fill="#fff"/><rect x="1718" y="248.5" width="8" height="2.5" fill="#2ad07a" stroke="#000" stroke-width=".7"/>
<path d="M1743 238.5V251.5M1748 238.5V251.5M1739.5 242.5H1751.5M1739.5 248.0H1751.5" stroke="#19c46a" stroke-width="1.8"/>
<rect x="1762" y="237.5" width="16" height="16" fill="#000"/>
<text x="1786" y="249.5" font-size="11" font-family="Liberation Sans" fill="#000">U</text>
<path d="M1686.5 188V257" stroke="#e6e6e6"/>
<path d="M1710.5 188V257" stroke="#e6e6e6"/>
<path d="M1734.5 188V257" stroke="#e6e6e6"/>
<path d="M1758.5 188V257" stroke="#e6e6e6"/>
<path d="M1782.5 188V257" stroke="#e6e6e6"/>
<path d="M1663 210.5H1917" stroke="#e0e0e0"/>
<path d="M1663 233.5H1917" stroke="#e0e0e0"/>
<path d="M1663 256.5H1917" stroke="#e0e0e0"/>
<path d="M1644 115L1647 112L1650 115Z" fill="#333"/><path d="M1644 943L1647 946L1650 943Z" fill="#555"/>
<path d="M46 957.5L41.5 961.5L46 965.5Z" fill="#333"/><path d="M1628 958.5L1631 961.5L1628 964.5Z" fill="#333"/>
<path d="M1644 527.5H1650M1644 529.5H1650M1644 531.5H1650" stroke="#555" stroke-width=".8"/>
<path d="M834.5 958V965M836.5 958V965M838.5 958V965" stroke="#555" stroke-width=".8"/>
</svg>
<!--ICONS-END-->
</body></html>
